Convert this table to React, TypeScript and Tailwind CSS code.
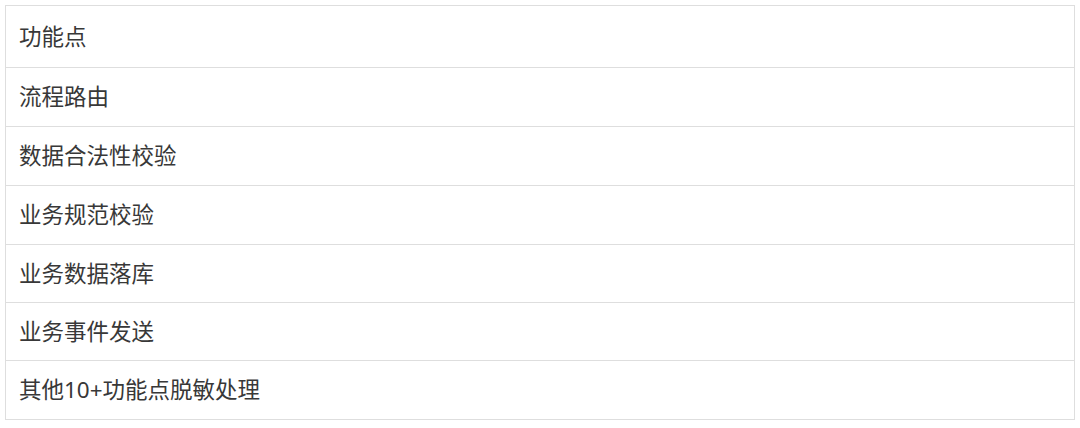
const rows = [
  { text: '流程路由', h: 'h-[59px]' },
  { text: '数据合法性校验', h: 'h-[59px]' },
  { text: '业务规范校验', h: 'h-[59px]' },
  { text: '业务数据落库', h: 'h-[58px]' },
  { text: '业务事件发送', h: 'h-[58px]' },
  { text: '其他10+功能点脱敏处理', h: 'h-[59px]' },
];

export default function App() {
  return (
    <div className="w-[1080px] h-[428px] bg-white pt-[5px] pl-[5px]">
      <div
        className="w-[1070px] border-t border-l border-r border-[#dedede] text-[#383838] text-[22.5px]"
        style={{ fontFamily: '"Noto Sans", "Noto Sans CJK SC", sans-serif' }}
      >
        <div className="h-[62px] flex items-center pl-[13px] border-b border-[#dedede]">
          功能点
        </div>
        {rows.map((r) => (
          <div
            key={r.text}
            className={`${r.h} flex items-center pl-[13px] border-b border-[#dedede]`}
          >
            {r.text}
          </div>
        ))}
      </div>
    </div>
  );
}
